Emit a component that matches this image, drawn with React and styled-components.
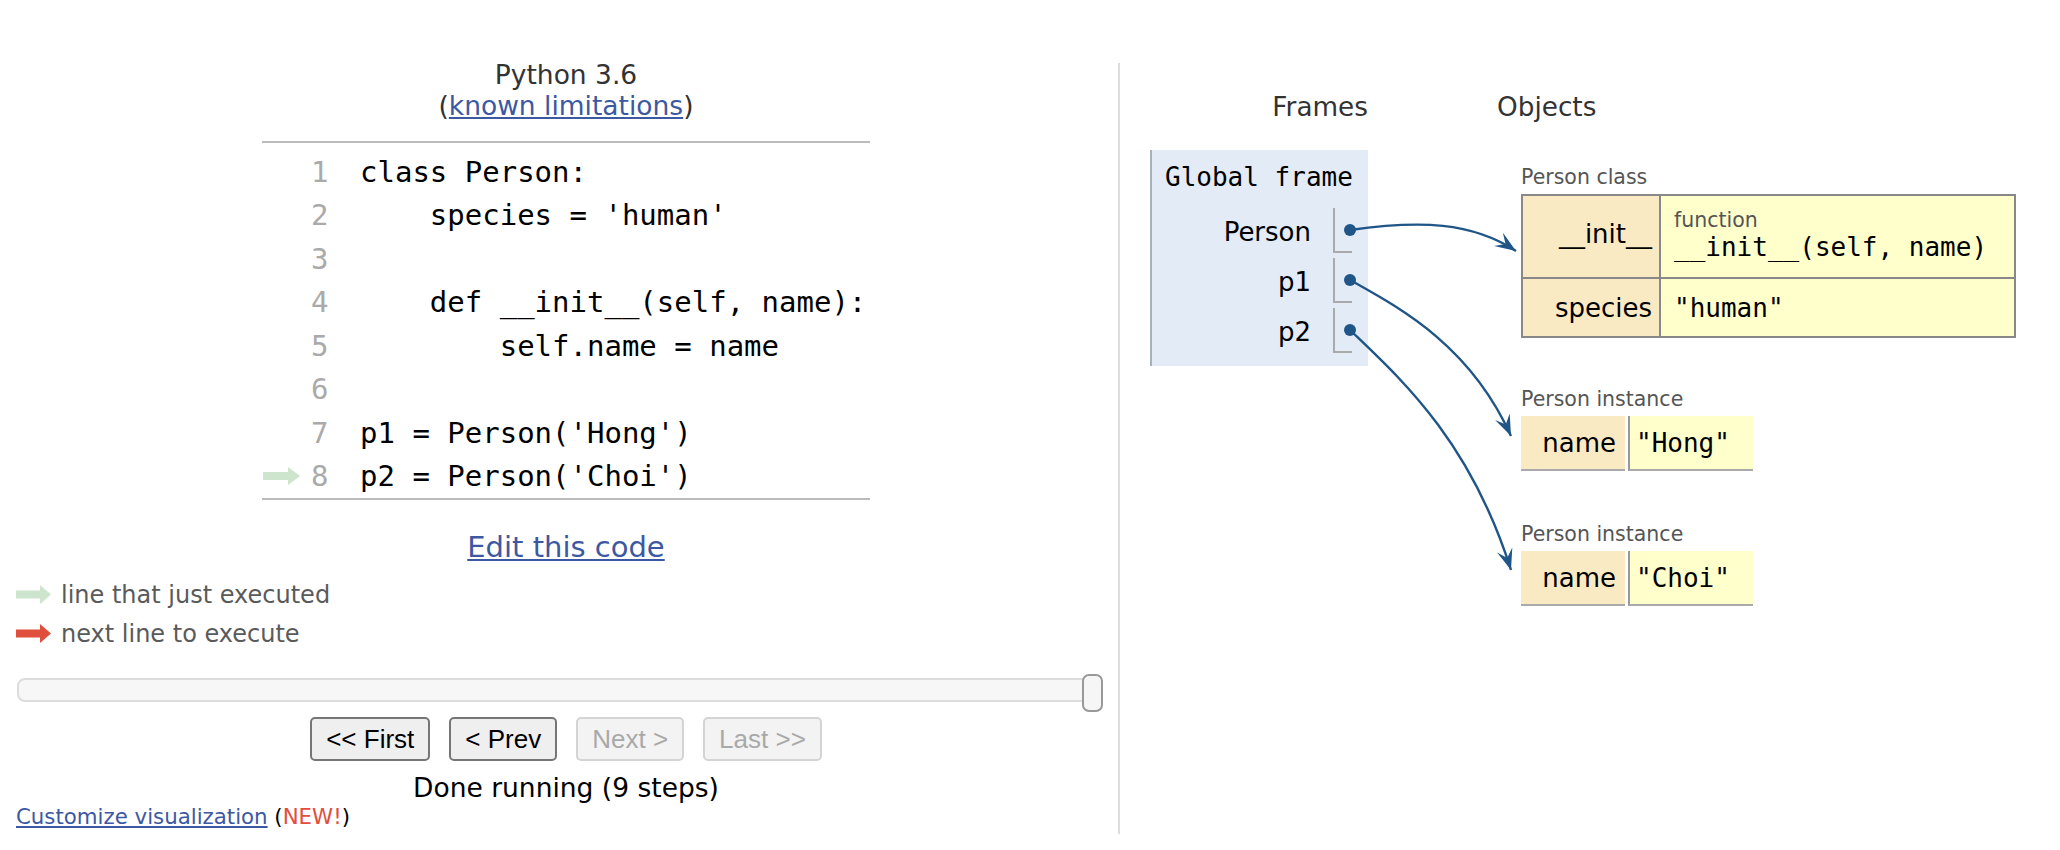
import React from 'react';
import styled, { createGlobalStyle } from 'styled-components';

const GlobalStyle = createGlobalStyle`
  html, body { margin: 0; padding: 0; background: #fff; }
  body { font-family: "DejaVu Sans", Verdana, sans-serif; }
  * { box-sizing: border-box; }
`;

const Page = styled.div`
  position: relative;
  width: 2060px;
  height: 850px;
  display: flex;
  align-items: flex-start;
  overflow: hidden;
`;

const LeftPanel = styled.div`
  width: 1100px;
  margin-left: 16px;
  padding-top: 59px;
  display: flex;
  flex-direction: column;
`;

const Title = styled.div`
  text-align: center;
  font-size: 26.5px;
  line-height: 31px;
  color: #333;
`;

const Link = styled.a`
  color: #3d58a2;
  text-decoration: underline;
  cursor: pointer;
`;

const CodeTable = styled.div`
  width: 608px;
  margin: 20px auto 0;
  border-top: 2px solid #bbb;
  border-bottom: 2px solid #bbb;
  padding-top: 7px;
`;

const CodeRow = styled.div`
  display: grid;
  grid-template-columns: 49px 17.5px 1fr;
  height: 43.5px;
  align-items: center;
  font-family: "DejaVu Sans Mono", monospace;
  font-size: 29px;
  line-height: 34px;
`;

const ArrowCell = styled.div`
  display: flex;
  align-items: center;
  padding-left: 1px;
`;

const LineNo = styled.div`
  color: #aaa;
  text-align: right;
`;

const CodeText = styled.div`
  padding-left: 31.5px;
  white-space: pre;
  color: #000;
`;

const EditLink = styled.div`
  margin-top: 30px;
  text-align: center;
  font-size: 29px;
  line-height: 34px;
`;

const Legend = styled.div`
  margin-top: 11px;
  display: flex;
  flex-direction: column;
`;

const LegendRow = styled.div`
  height: 39px;
  display: flex;
  align-items: center;
  gap: 10px;
  font-size: 24px;
  color: #5a5a5a;
`;

const SliderTrack = styled.div`
  position: relative;
  margin-top: 25px;
  margin-left: 1px;
  width: 1076px;
  height: 24px;
  border: 2px solid #dcdcdc;
  border-radius: 8px;
  background: #f7f7f7;
`;

const SliderHandle = styled.div`
  position: absolute;
  right: -12px;
  top: -6px;
  width: 21px;
  height: 38px;
  border: 2px solid #999;
  border-radius: 7px;
  background: #f6f6f6;
`;

const ButtonRow = styled.div`
  margin-top: 15px;
  display: flex;
  justify-content: center;
  gap: 19px;
`;

const NavButton = styled.button`
  font-family: "Liberation Sans", Arial, sans-serif;
  font-size: 26px;
  height: 44px;
  padding: 0 14px;
  border-radius: 5px;
  border: 2px solid ${(p) => (p.disabled ? '#d4d4d4' : '#767676')};
  background: ${(p) => (p.disabled ? '#f3f3f3' : '#efefef')};
  color: ${(p) => (p.disabled ? '#a9a9a9' : '#000')};
`;

const Status = styled.div`
  margin-top: 12px;
  text-align: center;
  font-size: 26.5px;
  line-height: 30px;
  color: #000;
`;

const Customize = styled.div`
  margin-top: 1px;
  font-size: 21.3px;
  line-height: 26px;
  color: #000;
`;

const NewTag = styled.span`
  color: #e44c3c;
`;

const RightPanel = styled.div`
  margin-top: 63px;
  margin-left: 2px;
  height: 771px;
  border-left: 2px solid #dddddd;
  padding-left: 30px;
  display: flex;
  align-items: flex-start;
`;

const FramesCol = styled.div`
  width: 218px;
  padding-top: 29px;
`;

const Header = styled.div`
  font-size: 26.3px;
  line-height: 30px;
  color: #333;
  text-align: ${(p) => p.align || 'left'};
`;

const FrameBox = styled.div`
  margin-top: 28px;
  background: #e2ebf6;
  border-left: 2px solid #a6b3b6;
  padding: 12px 16px 13px 13px;
`;

const FrameTitle = styled.div`
  font-family: "DejaVu Sans Mono", monospace;
  font-size: 26px;
  line-height: 30px;
  color: #000;
  white-space: pre;
`;

const VarList = styled.div`
  margin-top: 16px;
  display: flex;
  flex-direction: column;
  gap: 5px;
`;

const VarRow = styled.div`
  display: flex;
  justify-content: flex-end;
  height: 45px;
`;

const VarName = styled.div`
  font-size: 26px;
  padding-top: 3px;
  line-height: 42px;
  color: #000;
`;

const VarValue = styled.div`
  width: 19px;
  height: 45px;
  margin-left: 22px;
  border-left: 2px solid #aaa;
  border-bottom: 2px solid #aaa;
`;

const HeapCol = styled.div`
  margin-left: 129px;
  padding-top: 29px;
`;

const HeapList = styled.div`
  padding-left: 24px;
  padding-top: 43px;
  display: flex;
  flex-direction: column;
`;

const ObjectBlock = styled.div`
  margin-top: ${(p) => p.offset || 0}px;
`;

const ObjLabel = styled.div`
  font-size: 20.5px;
  line-height: 24px;
  color: #555;
  margin-bottom: 5px;
`;

const ClassTable = styled.div`
  width: 495px;
  border: 2px solid #888;
  display: grid;
  grid-template-columns: 138px 1fr;
`;

const KeyCell = styled.div`
  height: ${(p) => p.h}px;
  background: #faeac4;
  border-right: 2px solid #888;
  border-bottom: ${(p) => (p.last ? 'none' : '2px solid #888')};
  display: flex;
  align-items: center;
  justify-content: flex-end;
  padding-right: 7px;
  padding-bottom: ${(p) => p.lift || 0}px;
  font-size: 26px;
  color: #000;
`;

const ValCell = styled.div`
  height: ${(p) => p.h}px;
  background: #ffffcc;
  border-bottom: ${(p) => (p.last ? 'none' : '2px solid #888')};
  display: flex;
  flex-direction: column;
  justify-content: center;
  padding-left: 13px;
  padding-bottom: ${(p) => p.lift || 0}px;
`;

const FuncLabel = styled.div`
  font-size: 20.5px;
  line-height: 24px;
  color: #555;
`;

const Mono = styled.div`
  font-family: "DejaVu Sans Mono", monospace;
  font-size: 26px;
  line-height: 30px;
  color: #000;
  white-space: pre;
`;

const InstTable = styled.div`
  display: flex;
  gap: 3px;
  height: 55px;
`;

const InstKey = styled.div`
  width: 104px;
  background: #faeac4;
  border-bottom: 2px solid #aaa;
  display: flex;
  align-items: center;
  justify-content: flex-end;
  padding-right: 9px;
  font-size: 26px;
  color: #000;
`;

const InstVal = styled.div`
  width: 125px;
  background: #ffffcc;
  border-left: 2px solid #999;
  border-bottom: 2px solid #aaa;
  display: flex;
  align-items: center;
  padding-left: 6px;
`;

const Overlay = styled.svg`
  position: absolute;
  left: 0;
  top: 0;
  pointer-events: none;
`;

const ArrowGlyph = ({ color, w, h, shaft = 8, head = 11 }) => {
  const m = h / 2;
  const pts = [
    [0, m - shaft / 2],
    [w - head, m - shaft / 2],
    [w - head, 0],
    [w, m],
    [w - head, h],
    [w - head, m + shaft / 2],
    [0, m + shaft / 2],
  ]
    .map((p) => p.join(','))
    .join(' ');
  return (
    <svg width={w} height={h} viewBox={`0 0 ${w} ${h}`}>
      <polygon points={pts} fill={color} />
    </svg>
  );
};

const code = [
  'class Person:',
  "    species = 'human'",
  '',
  '    def __init__(self, name):',
  '        self.name = name',
  '',
  "p1 = Person('Hong')",
  "p2 = Person('Choi')",
];

const ARROW = '#1f5587';

const connectors = [
  { from: [1350, 230], c1: [1420, 220], c2: [1472, 222], to: [1516, 251] },
  { from: [1350, 280], c1: [1400, 308], c2: [1470, 345], to: [1511, 436] },
  { from: [1350, 330], c1: [1400, 378], c2: [1470, 440], to: [1511, 570] },
];

const arrowHead = (c2, to) => {
  const dx = to[0] - c2[0];
  const dy = to[1] - c2[1];
  const len = Math.hypot(dx, dy);
  const ux = dx / len;
  const uy = dy / len;
  const nx = -uy;
  const ny = ux;
  const L = 21;
  const W = 8;
  const bx = to[0] - ux * L;
  const by = to[1] - uy * L;
  const kx = to[0] - ux * L * 0.6;
  const ky = to[1] - uy * L * 0.6;
  return [
    [to[0], to[1]],
    [bx + nx * W, by + ny * W],
    [kx, ky],
    [bx - nx * W, by - ny * W],
  ]
    .map((p) => p.map((v) => v.toFixed(1)).join(','))
    .join(' ');
};

const instances = [
  { value: 'Hong', offset: 49 },
  { value: 'Choi', offset: 51 },
];

export default function App() {
  return (
    <Page>
      <GlobalStyle />
      <LeftPanel>
        <Title>Python 3.6</Title>
        <Title>
          (<Link>known limitations</Link>)
        </Title>
        <CodeTable>
          {code.map((line, i) => (
            <CodeRow key={i}>
              <ArrowCell>
                {i === 7 && <ArrowGlyph color="#cde5cc" w={37} h={18} shaft={8} head={12} />}
              </ArrowCell>
              <LineNo>{i + 1}</LineNo>
              <CodeText>{line}</CodeText>
            </CodeRow>
          ))}
        </CodeTable>
        <EditLink>
          <Link>Edit this code</Link>
        </EditLink>
        <Legend>
          <LegendRow>
            <ArrowGlyph color="#cde5cc" w={35} h={19} />
            line that just executed
          </LegendRow>
          <LegendRow>
            <ArrowGlyph color="#e04e3c" w={35} h={19} />
            next line to execute
          </LegendRow>
        </Legend>
        <SliderTrack>
          <SliderHandle />
        </SliderTrack>
        <ButtonRow>
          <NavButton>&lt;&lt; First</NavButton>
          <NavButton>&lt; Prev</NavButton>
          <NavButton disabled>Next &gt;</NavButton>
          <NavButton disabled>Last &gt;&gt;</NavButton>
        </ButtonRow>
        <Status>Done running (9 steps)</Status>
        <Customize>
          <Link>Customize visualization</Link> (<NewTag>NEW!</NewTag>)
        </Customize>
      </LeftPanel>

      <RightPanel>
        <FramesCol>
          <Header align="right">Frames</Header>
          <FrameBox>
            <FrameTitle>Global frame</FrameTitle>
            <VarList>
              {['Person', 'p1', 'p2'].map((n) => (
                <VarRow key={n}>
                  <VarName>{n}</VarName>
                  <VarValue />
                </VarRow>
              ))}
            </VarList>
          </FrameBox>
        </FramesCol>
        <HeapCol>
          <Header>Objects</Header>
          <HeapList>
            <ObjectBlock>
              <ObjLabel>Person class</ObjLabel>
              <ClassTable>
                <KeyCell h={83} lift={6}>
                  __init__
                </KeyCell>
                <ValCell h={83} lift={4}>
                  <FuncLabel>function</FuncLabel>
                  <Mono>__init__(self, name)</Mono>
                </ValCell>
                <KeyCell h={57} last>
                  species
                </KeyCell>
                <ValCell h={57} last>
                  <Mono>"human"</Mono>
                </ValCell>
              </ClassTable>
            </ObjectBlock>
            {instances.map((inst) => (
              <ObjectBlock key={inst.value} offset={inst.offset}>
                <ObjLabel>Person instance</ObjLabel>
                <InstTable>
                  <InstKey>name</InstKey>
                  <InstVal>
                    <Mono>"{inst.value}"</Mono>
                  </InstVal>
                </InstTable>
              </ObjectBlock>
            ))}
          </HeapList>
        </HeapCol>
      </RightPanel>

      <Overlay width="2060" height="850" viewBox="0 0 2060 850">
        {connectors.map((c, i) => (
          <g key={i}>
            <path
              d={`M${c.from[0]},${c.from[1]} C${c.c1[0]},${c.c1[1]} ${c.c2[0]},${c.c2[1]} ${c.to[0]},${c.to[1]}`}
              fill="none"
              stroke={ARROW}
              strokeWidth="2.4"
            />
            <polygon points={arrowHead(c.c2, c.to)} fill={ARROW} />
            <circle cx={c.from[0]} cy={c.from[1]} r="6" fill={ARROW} />
          </g>
        ))}
      </Overlay>
    </Page>
  );
}
